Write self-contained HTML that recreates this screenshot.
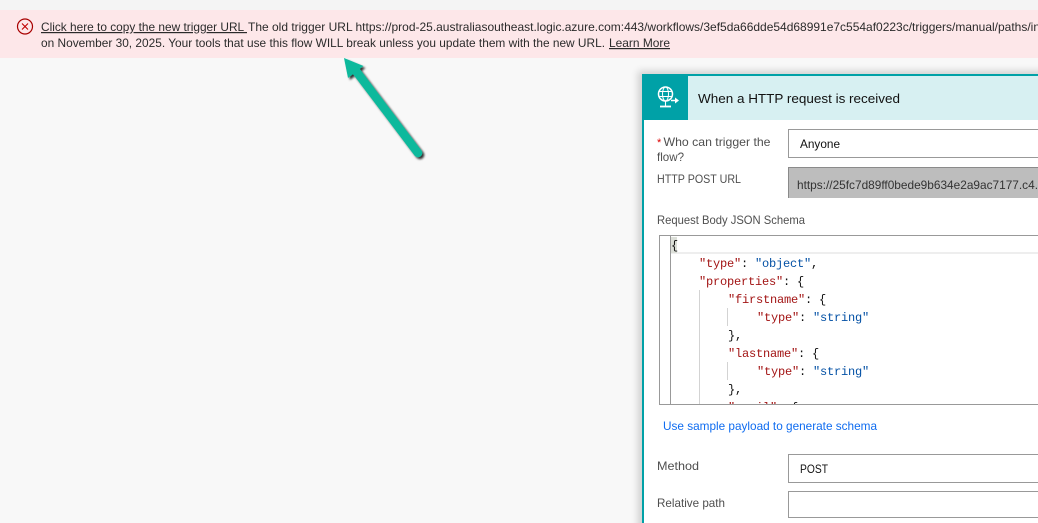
<!DOCTYPE html>
<html><head><meta charset="utf-8"><style>
html,body{margin:0;padding:0;width:1038px;height:523px;overflow:hidden;background:#f8f8f8}
svg{display:block}
text{font-family:"Liberation Sans",sans-serif;font-size:12px;white-space:pre}
text.m{font-family:"Liberation Mono",monospace;font-size:12px;letter-spacing:-.2px}
.k{fill:#a31515}.s{fill:#0451a5}.p{fill:#111}.l{fill:#4f4f4f}
</style></head><body>
<svg width="1038" height="523" viewBox="0 0 1038 523" xmlns="http://www.w3.org/2000/svg">
<defs>
<filter id="sh" x="-30%" y="-30%" width="160%" height="160%"><feDropShadow dx="2" dy="2" stdDeviation="1.100" flood-color="#000" flood-opacity=".8"/></filter>
<filter id="cs" x="-10%" y="-10%" width="120%" height="120%"><feGaussianBlur stdDeviation="4"/></filter>
<clipPath id="ed"><rect x="660" y="236" width="378" height="168"/></clipPath>
</defs>
<rect width="1038" height="10" fill="#f4f4f4"/>
<rect y="10" width="1038" height="48" fill="#fde7e9"/>
<circle cx="25" cy="26.500" r="7.500" fill="none" stroke="#a80000" stroke-width="1.200"/>
<path d="M22 23.500l6 6M28 23.500l-6 6" stroke="#c00000" stroke-width="1.100" fill="none"/>
<text x="41" y="31" fill="#2b2b2b" textLength="206" lengthAdjust="spacingAndGlyphs" text-decoration="underline">Click here to copy the new trigger URL </text>
<text x="248" y="31" fill="#2b2b2b" textLength="792" lengthAdjust="spacingAndGlyphs">The old trigger URL https://prod-25.australiasoutheast.logic.azure.com:443/workflows/3ef5da66dde54d68991e7c554af0223c/triggers/manual/paths/in</text>
<text x="41" y="47" fill="#2b2b2b" textLength="564" lengthAdjust="spacingAndGlyphs">on November 30, 2025. Your tools that use this flow WILL break unless you update them with the new URL.</text>
<text x="609" y="47" fill="#2b2b2b" textLength="61" lengthAdjust="spacingAndGlyphs" text-decoration="underline">Learn More</text>

<g filter="url(#sh)">
<path d="M356 71L418 153" stroke="#0fb99c" stroke-width="8.500" stroke-linecap="round" fill="none"/>
<path d="M344 58L363.500 66 348 78Z" fill="#0fb99c"/>
</g>

<rect x="638" y="71" width="420" height="470" fill="#000" opacity=".16" filter="url(#cs)"/>
<rect x="642" y="74" width="396" height="449" fill="#fff"/>
<rect x="642" y="74" width="396" height="2" fill="#00a1a7"/>
<rect x="642" y="74" width="2" height="449" fill="#00a1a7"/>
<rect x="688" y="76" width="350" height="44" fill="#d7f0f2"/>
<rect x="642" y="76" width="46" height="44" fill="#00a1a7"/>
<g fill="none" stroke="#fff">
<circle cx="665.500" cy="94" r="7" stroke-width="1.500"/>
<ellipse cx="665.500" cy="94" rx="3" ry="7" stroke-width="1"/>
<path d="M659 91.500h13M659 96.500h13M665.500 101v5" stroke-width="1.100"/>
<path d="M660 106.500h11" stroke-width="1.800"/>
<path d="M671 100.500h5" stroke-width="1.500"/>
</g>
<path d="M675 97.500l4 3-4 3z" fill="#fff"/>
<text x="698" y="103" fill="#111" style="font-size:13.300px" textLength="202" lengthAdjust="spacingAndGlyphs">When a HTTP request is received</text>

<text x="657" y="146" fill="#d00" style="font-size:11px">*</text>
<text x="663.500" y="146" class="l" textLength="107" lengthAdjust="spacingAndGlyphs">Who can trigger the</text>
<text x="657" y="161" class="l" textLength="27" lengthAdjust="spacingAndGlyphs">flow?</text>
<rect x="788.500" y="129.500" width="260" height="28" fill="#fff" stroke="#999"/>
<text x="800" y="148" fill="#111" textLength="40" lengthAdjust="spacingAndGlyphs">Anyone</text>

<text x="657" y="183" class="l" textLength="84" lengthAdjust="spacingAndGlyphs">HTTP POST URL</text>
<rect x="788" y="167" width="260" height="31" fill="#bdbdbd"/>
<path d="M788.500 198V167.500H1038" fill="none" stroke="#8a8a8a"/>
<text x="797" y="189" fill="#333" textLength="241" lengthAdjust="spacingAndGlyphs">https://25fc7d89ff0bede9b634e2a9ac7177.c4.</text>

<text x="657" y="224" class="l" textLength="148" lengthAdjust="spacingAndGlyphs">Request Body JSON Schema</text>

<rect x="659.500" y="235.500" width="390" height="169" fill="#fff" stroke="#999"/>
<path d="M670.500 236V404" stroke="#999"/>
<rect x="671" y="252" width="367" height="2" fill="#eee"/>
<rect x="671" y="237" width="6" height="16" fill="#dcdfd8"/>
<path d="M699.500 290V404M727.500 308V326M727.500 362V380" stroke="#d3d3d3"/>
<g clip-path="url(#ed)">
<text class="m p" x="671" y="249">{</text>
<text class="m" x="699" y="267"><tspan class="k">"type"</tspan><tspan class="p">: </tspan><tspan class="s">"object"</tspan><tspan class="p">,</tspan></text>
<text class="m" x="699" y="285"><tspan class="k">"properties"</tspan><tspan class="p">: {</tspan></text>
<text class="m" x="728" y="303"><tspan class="k">"firstname"</tspan><tspan class="p">: {</tspan></text>
<text class="m" x="757" y="321"><tspan class="k">"type"</tspan><tspan class="p">: </tspan><tspan class="s">"string"</tspan></text>
<text class="m p" x="728" y="339">},</text>
<text class="m" x="728" y="357"><tspan class="k">"lastname"</tspan><tspan class="p">: {</tspan></text>
<text class="m" x="757" y="375"><tspan class="k">"type"</tspan><tspan class="p">: </tspan><tspan class="s">"string"</tspan></text>
<text class="m p" x="728" y="393">},</text>
<text class="m" x="728" y="411"><tspan class="k">"email"</tspan><tspan class="p">: {</tspan></text>
</g>

<text x="663" y="430" fill="#0f6cf0" textLength="214" lengthAdjust="spacingAndGlyphs">Use sample payload to generate schema</text>

<text x="657" y="470" class="l" textLength="42" lengthAdjust="spacingAndGlyphs">Method</text>
<rect x="788.500" y="454.500" width="260" height="28" fill="#fff" stroke="#999"/>
<text x="800" y="473" fill="#111" textLength="28" lengthAdjust="spacingAndGlyphs">POST</text>

<text x="657" y="507" class="l" textLength="68" lengthAdjust="spacingAndGlyphs">Relative path</text>
<rect x="788.500" y="491.500" width="260" height="26" fill="#fff" stroke="#999"/>
</svg>
</body></html>
